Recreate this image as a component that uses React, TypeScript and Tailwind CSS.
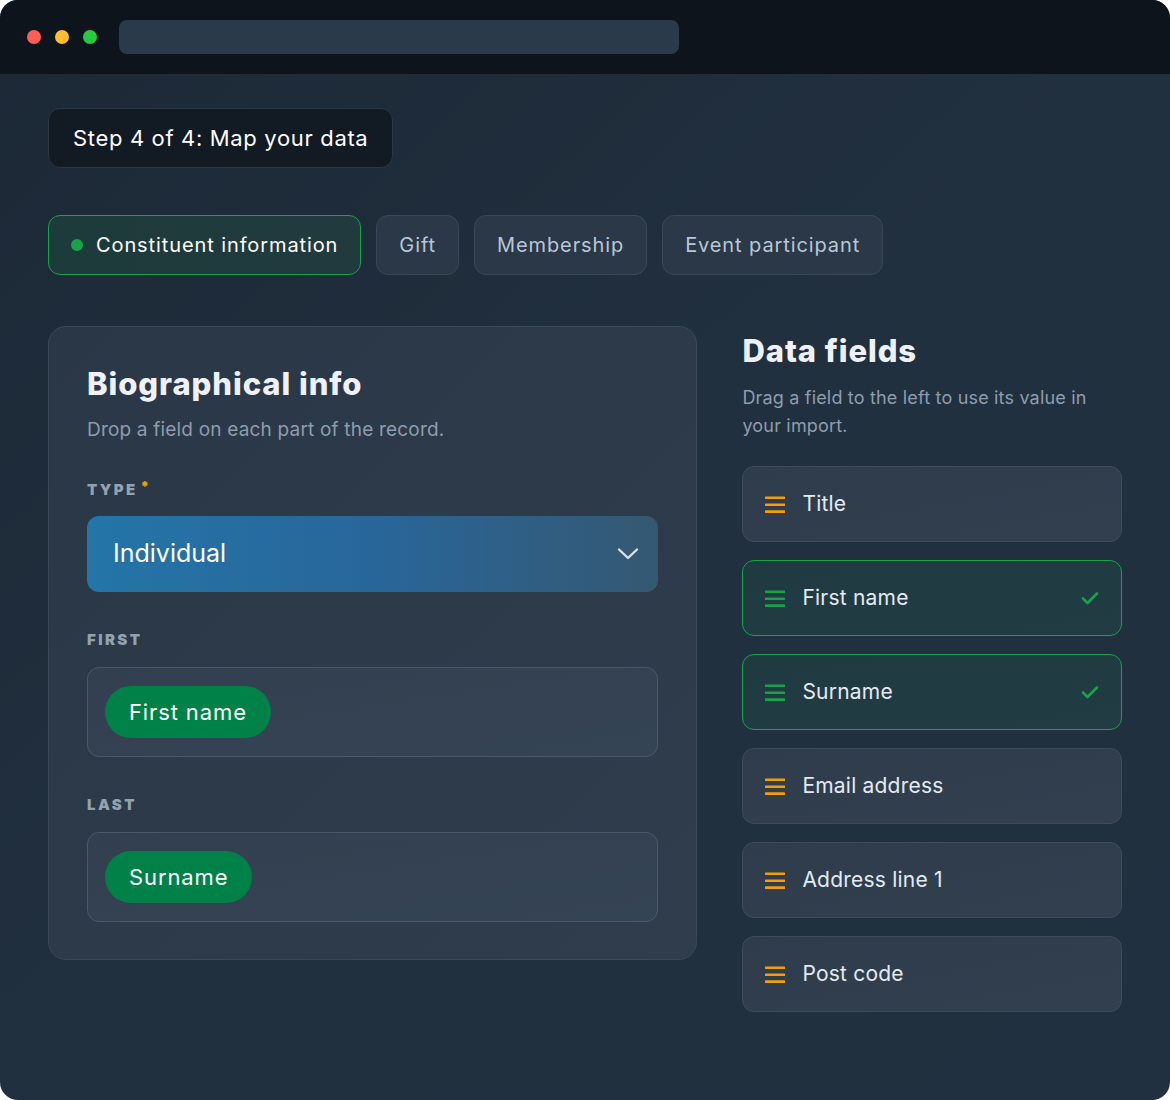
import React from "react";

const head = { fontFamily: "Inter, 'Noto Sans', sans-serif" };
const body = { fontFamily: "Inter, 'Noto Sans', sans-serif" };

function Burger({ color }: { color: string }) {
  return (
    <svg width="20" height="18" viewBox="0 0 20 18" className="shrink-0">
      <rect x="0" y="1.5" width="20" height="2.6" rx="0.5" fill={color} />
      <rect x="0" y="8.5" width="20" height="2.6" rx="0.5" fill={color} />
      <rect x="0" y="15.3" width="20" height="2.6" rx="0.5" fill={color} />
    </svg>
  );
}

function Check() {
  return (
    <svg width="18" height="14" viewBox="0 0 18 14" className="shrink-0">
      <path d="M2 7.5 L6.5 12 L16 2.5" fill="none" stroke="#16a34a" strokeWidth="2.6" strokeLinecap="round" strokeLinejoin="round" />
    </svg>
  );
}

function FieldItem({ label, mapped }: { label: string; mapped?: boolean }) {
  return (
    <div
      className={
        mapped
          ? "h-[76px] rounded-xl border border-[#16a34a] bg-gradient-to-br from-[#203a42] to-[#223c44] flex items-center pl-[22px] pr-[22px]"
          : "h-[76px] rounded-xl border border-[#3e4b5b] bg-gradient-to-br from-[#2e3c4c] to-[#313f4f] flex items-center pl-[22px] pr-[22px]"
      }
    >
      <Burger color={mapped ? "#16a34a" : "#f59e0b"} />
      <span className="ml-[17px] text-[21px] tracking-[0.01em] text-[#e4ebf2] flex-1" style={body}>
        {label}
      </span>
      {mapped && <Check />}
    </div>
  );
}

function Label({ children, star }: { children: React.ReactNode; star?: boolean }) {
  return (
    <div className="flex items-start leading-[20px] text-[15px] font-black tracking-[0.16em] text-[#93a1b1]" style={head}>
      {children}
      {star && <span className="text-[#f59e0b] text-[14px] leading-[14px] ml-[3px] tracking-normal">*</span>}
    </div>
  );
}

function DropZone({ pill }: { pill: string }) {
  return (
    <div className="mt-[17px] h-[90px] rounded-xl border border-[#4a5869] bg-gradient-to-br from-[#323f4f] to-[#354455] flex items-center pl-[17px]">
      <div className="h-[52px] rounded-full bg-[#008148] px-[24px] flex items-center text-[22px] tracking-[0.04em] text-white" style={head}>
        {pill}
      </div>
    </div>
  );
}

export default function App() {
  return (
    <div className="bg-white w-[1170px] h-[1100px]">
      <div className="w-[1170px] h-[1100px] rounded-[18px] overflow-hidden flex flex-col bg-gradient-to-br from-[#1c2836] via-[#21303f] to-[#203040]">
        <div className="h-[74px] bg-[#0d141c] flex items-center pl-[27px] shrink-0">
          <div className="flex gap-[14px]">
            <div className="w-[14px] h-[14px] rounded-full bg-[#ff5f57]" />
            <div className="w-[14px] h-[14px] rounded-full bg-[#febc2e]" />
            <div className="w-[14px] h-[14px] rounded-full bg-[#28c840]" />
          </div>
          <div className="ml-[22px] w-[560px] h-[34px] rounded-lg bg-[#2a3a4a]" />
        </div>

        <div className="px-[48px] pt-[34px]">
          <div className="inline-flex h-[60px] items-center px-[24px] rounded-xl border border-[#2c3744] bg-[#121a24] text-[22px] tracking-[0.03em] text-white" style={head}>
            Step 4 of 4: Map your data
          </div>

          <div className="mt-[47px] flex gap-[15px]">
            <div className="h-[60px] flex items-center pl-[22px] pr-[22px] rounded-xl border border-[#16a34a] bg-gradient-to-r from-[#1d3b3a] to-[#213a3e] text-[20px] tracking-[0.045em] text-white" style={head}>
              <div className="w-[12px] h-[12px] rounded-full bg-[#16a34a]" />
              <span className="ml-[13px]">Constituent information</span>
            </div>
            {["Gift", "Membership", "Event participant"].map((t) => (
              <div
                key={t}
                className="h-[60px] flex items-center px-[22px] rounded-xl border border-[#3a4757] bg-[#2a3847] text-[20px] tracking-[0.045em] text-[#b9c7d6]"
                style={head}
              >
                {t}
              </div>
            ))}
          </div>

          <div className="mt-[51px] flex gap-[45px] items-start">
            <div className="w-[650px] rounded-[18px] border border-[#3b4858] bg-gradient-to-br from-[#2a3746] to-[#2f3d4c] pt-[39px] pb-[37px] px-[38px]">
              <div className="text-[31px] leading-[36px] font-extrabold text-[#eef2f8] tracking-[0.03em]" style={head}>
                Biographical info
              </div>
              <div className="mt-[15px] text-[19px] leading-[26px] tracking-[0.01em] text-[#8e9dad]" style={body}>
                Drop a field on each part of the record.
              </div>

              <div className="mt-[37px]">
                <Label star>TYPE</Label>
              </div>
              <div className="mt-[16px] h-[76px] rounded-xl bg-gradient-to-r from-[#2475a8] via-[#28669a] to-[#345872] flex items-center pl-[26px] pr-[19px]">
                <span className="flex-1 text-[25px] text-white" style={body}>
                  Individual
                </span>
                <svg width="22" height="14" viewBox="0 0 22 14">
                  <path d="M2 2.5 L11 11 L20 2.5" fill="none" stroke="#dbe3ea" strokeWidth="2.4" strokeLinecap="round" strokeLinejoin="round" />
                </svg>
              </div>

              <div className="mt-[38px]">
                <Label>FIRST</Label>
              </div>
              <DropZone pill="First name" />

              <div className="mt-[38px]">
                <Label>LAST</Label>
              </div>
              <DropZone pill="Surname" />
            </div>

            <div className="w-[380px] pt-[7px]">
              <div className="text-[31px] leading-[36px] font-extrabold text-[#eef2f8] tracking-[0.03em]" style={head}>
                Data fields
              </div>
              <div className="mt-[15px] text-[18px] leading-[28px] tracking-[0.01em] text-[#8e9dad]" style={body}>
                Drag a field to the left to use its value in your import.
              </div>
              <div className="mt-[26px] flex flex-col gap-[18px]">
                <FieldItem label="Title" />
                <FieldItem label="First name" mapped />
                <FieldItem label="Surname" mapped />
                <FieldItem label="Email address" />
                <FieldItem label="Address line 1" />
                <FieldItem label="Post code" />
              </div>
            </div>
          </div>
        </div>
      </div>
    </div>
  );
}
